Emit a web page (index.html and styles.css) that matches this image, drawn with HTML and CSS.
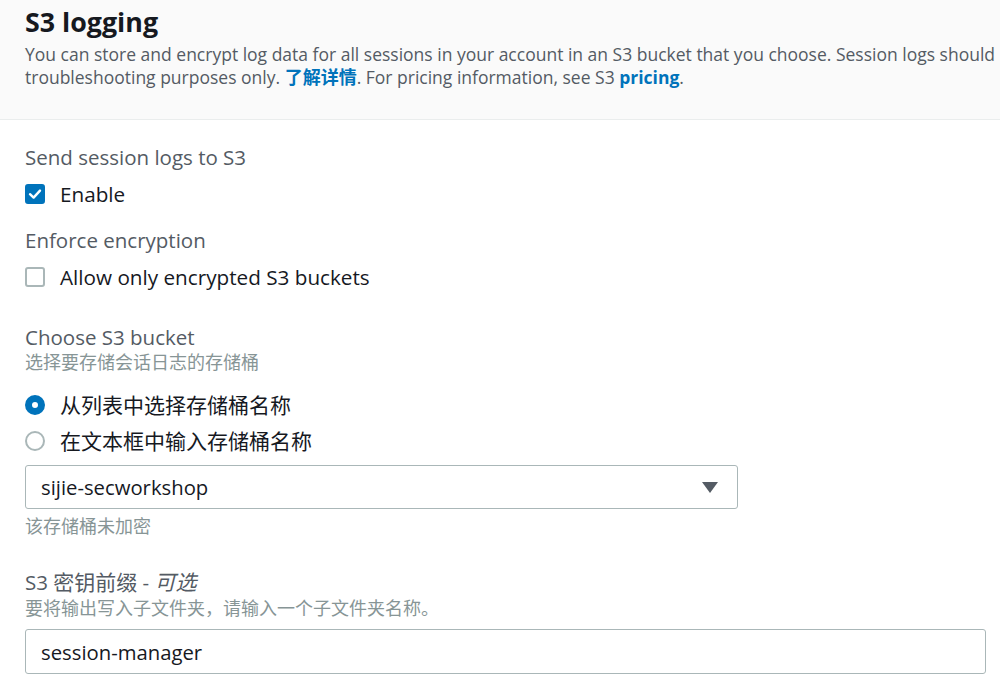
FILE: index.html
```html
<!DOCTYPE html>
<html lang="zh-CN">
<head>
<meta charset="utf-8">
<title>S3 logging</title>
<link rel="stylesheet" href="styles.css">
</head>
<body>
<div class="panel">
  <div class="header">
    <h2 class="title">S3 logging</h2>
    <p class="desc"><span class="desc-line">You can store and encrypt log data for all sessions in your account in an S3 bucket that you choose. Session logs should be used for</span><span class="desc-line">troubleshooting purposes only. <a class="link cjk" href="#">了解详情</a>. For pricing information, see S3 <a class="link" href="#">pricing</a>.</span></p>
  </div>
  <div class="content">
    <div class="field f-send">
      <div class="label">Send session logs to S3</div>
      <label class="option opt-first">
        <span class="checkbox checked">
          <svg viewBox="0 0 20 20" width="20" height="20"><path d="M5 10.2 L8.6 13.6 L15 6.6" fill="none" stroke="#fff" stroke-width="2.4" stroke-linecap="round" stroke-linejoin="round"/></svg>
        </span>
        <span class="opt-text">Enable</span>
      </label>
    </div>
    <div class="field f-enc">
      <div class="label">Enforce encryption</div>
      <label class="option opt-first">
        <span class="checkbox"></span>
        <span class="opt-text">Allow only encrypted S3 buckets</span>
      </label>
    </div>
    <div class="field f-bucket">
      <div class="label">Choose S3 bucket</div>
      <div class="sub">选择要存储会话日志的存储桶</div>
      <label class="option opt-radio1">
        <span class="radio checked"></span>
        <span class="opt-text cjk-opt">从列表中选择存储桶名称</span>
      </label>
      <label class="option opt-radio2">
        <span class="radio"></span>
        <span class="opt-text cjk-opt">在文本框中输入存储桶名称</span>
      </label>
      <div class="select">
        <span class="select-value">sijie-secworkshop</span>
        <svg class="caret" viewBox="0 0 16 11" width="16" height="11"><path d="M0 0 H16 L8 11 Z" fill="#545b64"/></svg>
      </div>
      <div class="hint">该存储桶未加密</div>
    </div>
    <div class="field f-prefix">
      <div class="label">S3 <span class="cjk-label">密钥前缀</span> - <i class="opt-tag cjk-label">可选</i></div>
      <div class="sub sub-tight">要将输出写入子文件夹，请输入一个子文件夹名称。</div>
      <div class="input">session-manager</div>
    </div>
  </div>
</div>
</body>
</html>
```
FILE: styles.css
```css
* { box-sizing: border-box; }
html, body { margin: 0; padding: 0; background: #ffffff; }
body {
  font-family: "Open Sans", "Noto Sans CJK SC", sans-serif;
  color: #16191f;
  overflow: hidden;
  width: 1000px;
  height: 685px;
}
.panel { width: 1000px; overflow: hidden; }
.header {
  background: #fafafa;
  border-bottom: 1px solid #eaeded;
  padding: 7px 0 0 25px;
  height: 120px;
  overflow: hidden;
}
.title {
  margin: 0;
  font-size: 26.8px;
  line-height: 30px;
  font-weight: 700;
  color: #16191f;
}
.desc {
  margin: 6px 0 0 0;
  font-size: 17.5px;
  line-height: 23px;
  color: #545b64;
  width: 1200px;
}
.desc-line { display: block; white-space: nowrap; }
.link { color: #0073bb; font-weight: 700; text-decoration: none; }
.cjk { font-size: 18px; }
.content {
  padding: 25px 15px 0 25px;
  display: flex;
  flex-direction: column;
}
.field { display: flex; flex-direction: column; }
.label {
  font-size: 20.5px;
  line-height: 24px;
  color: #545b64;
  white-space: nowrap;
}
.cjk-label { font-size: 21px; }
.opt-tag { font-style: italic; }
.sub {
  font-size: 18px;
  line-height: 22px;
  color: #879596;
  margin-top: 2px;
}
.sub-tight { margin-top: 3px; }
.option {
  display: flex;
  align-items: center;
  height: 24px;
  gap: 15px;
}
.opt-first { margin-top: 13px; }
.opt-radio1 { margin-top: 20px; }
.opt-radio2 { margin-top: 12px; }
.opt-text { font-size: 20.7px; line-height: 24px; color: #16191f; white-space: nowrap; }
.cjk-opt { font-size: 21px; }
.checkbox {
  width: 20px;
  height: 20px;
  border-radius: 3px;
  border: 2px solid #aab7b8;
  background: #fff;
  display: flex;
  align-items: center;
  justify-content: center;
  flex: none;
}
.checkbox.checked { background: #0073bb; border-color: #0073bb; }
.checkbox svg { display: block; margin: -2px; }
.radio {
  width: 20px;
  height: 20px;
  border-radius: 50%;
  border: 2px solid #aab7b8;
  background: #fff;
  flex: none;
}
.radio.checked { border: 7px solid #0073bb; }
.f-enc { margin-top: 22px; }
.f-bucket { margin-top: 36px; }
.f-prefix { margin-top: 33px; }
.select {
  margin-top: 12px;
  width: 713px;
  height: 44px;
  border: 1px solid #aab7b8;
  border-radius: 3px;
  display: flex;
  align-items: center;
  justify-content: space-between;
  padding: 0 19px 0 15px;
}
.select-value, .input { font-size: 20.3px; color: #16191f; }
.caret { display: block; }
.hint {
  margin-top: 6px;
  font-size: 18px;
  line-height: 22px;
  color: #879596;
}
.input {
  margin-top: 10px;
  width: 961px;
  height: 45px;
  border: 1px solid #aab7b8;
  border-radius: 3px;
  display: flex;
  align-items: center;
  padding: 0 15px;
}
```
